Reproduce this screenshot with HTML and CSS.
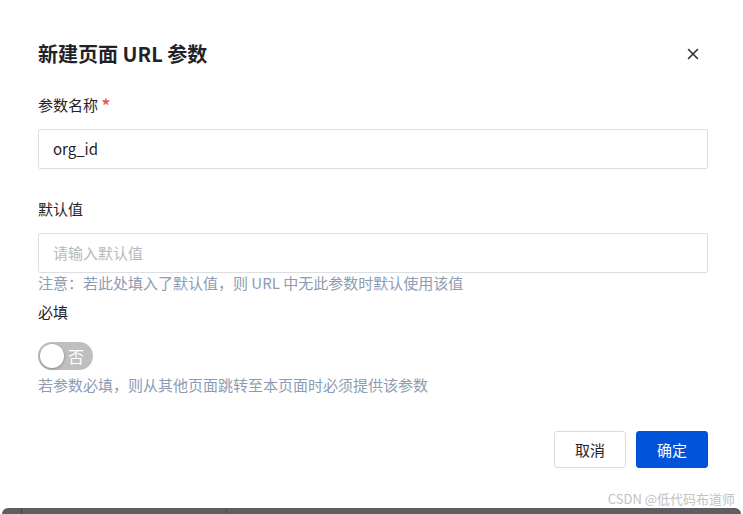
FILE: index.html
```html
<!DOCTYPE html>
<html lang="zh-CN">
<head>
  <meta charset="UTF-8">
  <meta name="viewport" content="width=device-width, initial-scale=1.0">
  <title>新建页面 URL 参数</title>
  <link rel="stylesheet" href="styles.css">
</head>
<body>
  <div class="dialog">
    <div class="dialog-header">
      <div class="dialog-title">新建页面 URL 参数</div>
      <button class="close-btn" aria-label="关闭">
        <svg width="12" height="12" viewBox="0 0 12 12">
          <path d="M1.5 1.5 L10.5 10.5 M10.5 1.5 L1.5 10.5" stroke="#2b2f36" stroke-width="1.6" stroke-linecap="round"/>
        </svg>
      </button>
    </div>

    <div class="form">
      <div class="form-item">
        <div class="form-label">参数名称<span class="required">*</span></div>
        <div class="input">org_id</div>
      </div>

      <div class="form-item item-tip">
        <div class="form-label">默认值</div>
        <div class="input placeholder">请输入默认值</div>
        <div class="form-tip">注意：若此处填入了默认值，则 URL 中无此参数时默认使用该值</div>
      </div>

      <div class="form-item switch-item">
        <div class="form-label">必填</div>
        <div class="switch">
          <span class="switch-knob"></span>
          <span class="switch-text">否</span>
        </div>
        <div class="form-tip">若参数必填，则从其他页面跳转至本页面时必须提供该参数</div>
      </div>
    </div>

    <div class="dialog-footer">
      <button class="btn btn-default">取消</button>
      <button class="btn btn-primary">确定</button>
    </div>

    <div class="watermark">CSDN @低代码布道师</div>
  </div>

  <div class="page-strip">
    <div class="strip-col"></div>
  </div>
</body>
</html>
```

FILE: styles.css
```css
* {
  margin: 0;
  padding: 0;
  box-sizing: border-box;
}

body {
  width: 743px;
  height: 514px;
  overflow: hidden;
  background: #ffffff;
  font-family: "Noto Sans CJK SC", "Noto Sans", sans-serif;
  color: #1f2329;
}

.dialog {
  height: 508px;
  padding: 0 35px 0 38px;
  background: #ffffff;
  display: flex;
  flex-direction: column;
}

.dialog-header {
  display: flex;
  align-items: center;
  justify-content: space-between;
  padding-top: 39px;
  height: 69px;
}

.dialog-title {
  font-size: 20px;
  font-weight: bold;
  line-height: 30px;
  color: #1f2329;
}

.close-btn {
  width: 24px;
  height: 24px;
  margin-right: 3px;
  border: none;
  background: none;
  display: flex;
  align-items: center;
  justify-content: center;
  cursor: pointer;
}

.form {
  padding-top: 25px;
}

.form-label {
  font-size: 15px;
  line-height: 22px;
  color: #1f2329;
  margin-bottom: 13px;
}

.required {
  color: #e34d59;
  font-size: 21px;
  line-height: 10px;
  margin-left: 3px;
  position: relative;
  top: 4px;
}

.form-item {
  margin-bottom: 29px;
}

.form-item.item-tip {
  margin-bottom: 7px;
}

.form-item.switch-item {
  margin-bottom: 0;
}

.input {
  height: 40px;
  border: 1px solid #dcdee2;
  border-radius: 2px;
  padding: 0 14px;
  font-size: 15px;
  line-height: 38px;
  color: #1f2329;
}

.input.placeholder {
  color: #b5b9c0;
}

.form-tip {
  font-size: 15px;
  line-height: 22px;
  color: #8d9bb3;
  margin-top: -1px;
}

.switch-item .form-label {
  margin-bottom: 19px;
}

.switch {
  width: 55px;
  height: 28px;
  border-radius: 14px;
  background: #bfbfbf;
  display: flex;
  align-items: center;
  padding: 0 2px;
  margin-bottom: 5px;
}

.switch-knob {
  width: 24px;
  height: 24px;
  border-radius: 50%;
  background: #ffffff;
  box-shadow: 0 1px 3px rgba(0, 0, 0, 0.3);
}

.switch-text {
  color: #ffffff;
  font-size: 16px;
  margin-left: 4px;
}

.dialog-footer {
  display: flex;
  justify-content: flex-end;
  gap: 10px;
  margin-top: 35px;
}

.btn {
  width: 72px;
  height: 37px;
  border-radius: 3px;
  font-family: "Noto Sans CJK SC", "Noto Sans", sans-serif;
  font-size: 15px;
  cursor: pointer;
}

.btn-default {
  background: #ffffff;
  border: 1px solid #d9dbe0;
  color: #1f2329;
}

.btn-primary {
  background: #0052d9;
  border: 1px solid #0052d9;
  color: #ffffff;
}

.watermark {
  margin-top: auto;
  margin-right: -27px;
  margin-bottom: 0;
  text-align: right;
  font-size: 13px;
  color: #c2c2c2;
  line-height: 18px;
}

.page-strip {
  height: 6px;
  margin: 0 2px;
  background: #5d5e62;
  border-radius: 6px 6px 0 0;
}

.strip-col {
  height: 6px;
  width: 206px;
  margin-left: 19px;
  border-left: 1px solid #26408a;
  border-right: 1px solid #4f5054;
}
```
